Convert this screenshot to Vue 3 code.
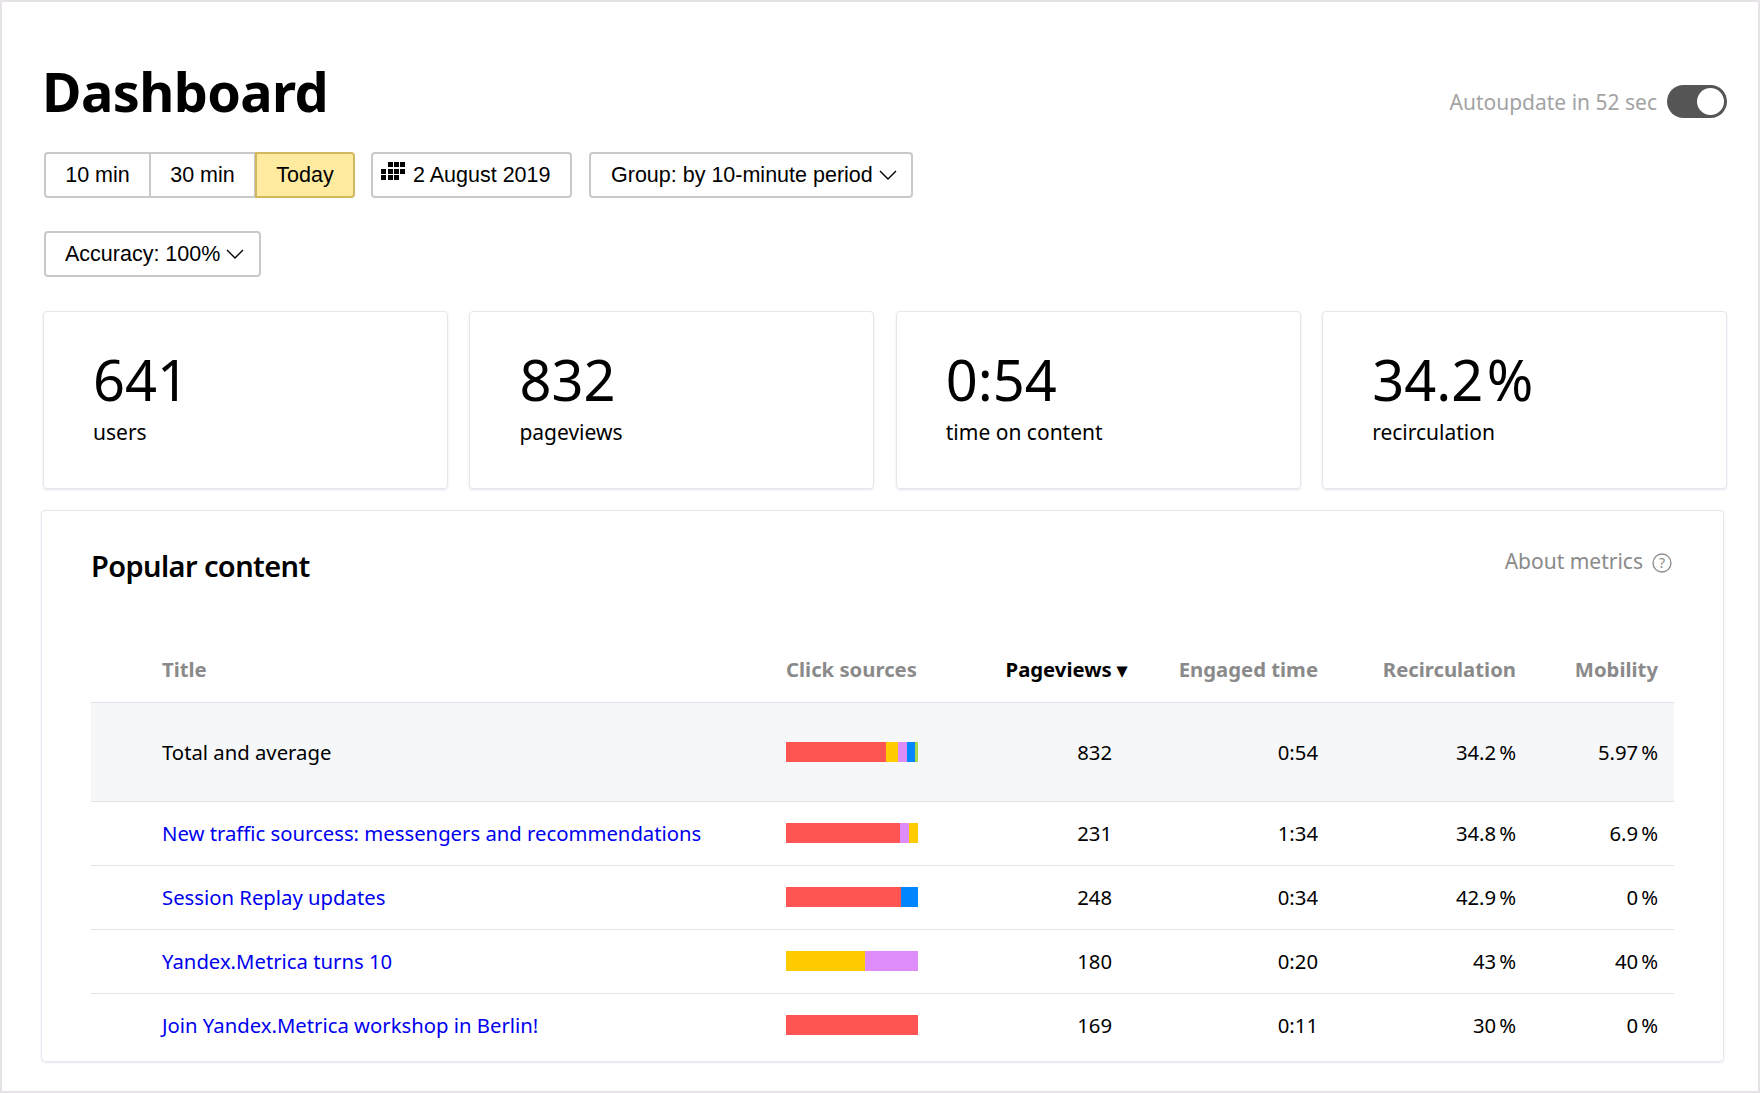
<script setup>
const tabs = [
  { label: '10 min', w: 107 },
  { label: '30 min', w: 105 },
  { label: 'Today', w: 100, active: true },
]
const stats = [
  { value: '641', label: 'users' },
  { value: '832', label: 'pageviews' },
  { value: '0:54', label: 'time on content' },
  { value: '34.2 %', label: 'recirculation' },
]
const R = '#ff5552', Y = '#ffcc00', P = '#de8cfa', B = '#0087ff', G = '#a5d84c'
const rows = [
  { title: 'New traffic sourcess: messengers and recommendations', bar: [[R, 114], [P, 9], [Y, 9]], views: '231', time: '1:34', rec: '34.8', mob: '6.9' },
  { title: 'Session Replay updates', bar: [[R, 115], [B, 17]], views: '248', time: '0:34', rec: '42.9', mob: '0' },
  { title: 'Yandex.Metrica turns 10', bar: [[Y, 79], [P, 53]], views: '180', time: '0:20', rec: '43', mob: '40' },
  { title: 'Join Yandex.Metrica workshop in Berlin!', bar: [[R, 132]], views: '169', time: '0:11', rec: '30', mob: '0' },
]
const totalBar = [[R, 100], [Y, 12], [P, 9], [B, 8], [G, 3]]
</script>

<template>
  <div class="frame">
    <header class="top">
      <h1>Dashboard</h1>
      <div class="auto">
        <span>Autoupdate in 52 sec</span>
        <div class="toggle"><i></i></div>
      </div>
    </header>

    <div class="controls">
      <div class="tabs">
        <div v-for="t in tabs" :key="t.label" class="tab" :class="{ active: t.active }" :style="{ width: t.w + 'px' }">{{ t.label }}</div>
      </div>
      <div class="btn date">
        <svg width="25" height="18" viewBox="0 0 25 18" fill="#000">
          <rect x="7" y="0" width="5" height="5" /><rect x="13" y="0" width="5" height="5" /><rect x="19" y="0" width="5" height="5" />
          <rect x="0" y="7" width="5" height="5" /><rect x="7" y="7" width="5" height="5" /><rect x="13" y="7" width="5" height="5" /><rect x="19" y="7" width="5" height="5" />
          <rect x="0" y="13" width="5" height="5" /><rect x="7" y="13" width="5" height="5" /><rect x="13" y="13" width="5" height="5" />
        </svg>
        <span>2 August 2019</span>
      </div>
      <div class="btn select group">
        <span>Group: by 10-minute period</span>
        <svg class="chev" width="18" height="10" viewBox="0 0 18 10"><path d="M1 1l8 8 8-8" fill="none" stroke="#000" stroke-width="1.4" /></svg>
      </div>
    </div>

    <div class="btn select accuracy">
      <span>Accuracy: 100%</span>
      <svg class="chev" width="18" height="10" viewBox="0 0 18 10"><path d="M1 1l8 8 8-8" fill="none" stroke="#000" stroke-width="1.4" /></svg>
    </div>

    <section class="stats">
      <div v-for="s in stats" :key="s.label" class="card">
        <div class="value">{{ s.value }}</div>
        <div class="label">{{ s.label }}</div>
      </div>
    </section>

    <section class="panel">
      <div class="panel-head">
        <h2>Popular content</h2>
        <div class="about">
          <span>About metrics</span>
          <svg width="20" height="20" viewBox="0 0 20 20">
            <circle cx="10" cy="10" r="9" fill="none" stroke="#8a8a8a" stroke-width="1.3" />
            <text x="10" y="15" text-anchor="middle" font-size="14" font-family="Noto Sans" fill="#8a8a8a">?</text>
          </svg>
        </div>
      </div>

      <div class="table">
        <div class="tr thead">
          <div class="c title">Title</div>
          <div class="c">Click sources</div>
          <div class="c num sorted">Pageviews ▾</div>
          <div class="c num">Engaged time</div>
          <div class="c num">Recirculation</div>
          <div class="c num">Mobility</div>
        </div>
        <div class="tr total">
          <div class="c title">Total and average</div>
          <div class="c"><div class="bar"><i v-for="(b, i) in totalBar" :key="i" :style="{ background: b[0], width: b[1] + 'px' }"></i></div></div>
          <div class="c num views">832</div>
          <div class="c num">0:54</div>
          <div class="c num">34.2<span class="pct">%</span></div>
          <div class="c num">5.97<span class="pct">%</span></div>
        </div>
        <div v-for="r in rows" :key="r.title" class="tr row">
          <div class="c title"><a href="#">{{ r.title }}</a></div>
          <div class="c"><div class="bar"><i v-for="(b, i) in r.bar" :key="i" :style="{ background: b[0], width: b[1] + 'px' }"></i></div></div>
          <div class="c num views">{{ r.views }}</div>
          <div class="c num">{{ r.time }}</div>
          <div class="c num">{{ r.rec }}<span class="pct">%</span></div>
          <div class="c num">{{ r.mob }}<span class="pct">%</span></div>
        </div>
      </div>
    </section>
  </div>
</template>

<style>
html, body { margin: 0; background: #fff; }
</style>

<style scoped>
.frame {
  box-sizing: border-box;
  width: 1760px;
  height: 1093px;
  border: 2px solid #e6e2e8;
  background: #fff;
  padding: 0 0 0 41px;
  font-family: "Noto Sans", sans-serif;
  color: #000;
  overflow: hidden;
}
.top {
  display: flex;
  justify-content: space-between;
  align-items: flex-start;
  height: 150px;
  padding-right: 31px;
}
h1 {
  margin: 54px 0 0 -1px;
  font-size: 54px;
  line-height: 70px;
  font-weight: 700;
  letter-spacing: -.6px;
}
.auto {
  display: flex;
  align-items: center;
  gap: 10px;
  margin-top: 83px;
  font-size: 21px;
  color: #a3a3a3;
}
.toggle {
  width: 60px;
  height: 33px;
  border-radius: 17px;
  background: #555;
  position: relative;
}
.toggle i {
  position: absolute;
  right: 3px;
  top: 3px;
  width: 27px;
  height: 27px;
  border-radius: 50%;
  background: #fff;
}
.controls {
  display: flex;
  align-items: flex-start;
}
.tabs {
  display: flex;
  margin-left: 1px;
  margin-right: 16px;
}
.tab, .btn {
  box-sizing: border-box;
  height: 46px;
  display: flex;
  align-items: center;
  border: 2px solid #c9c9c9;
  background: #fff;
  font-family: "Liberation Sans", sans-serif;
  font-size: 21.5px;
}
.tab {
  justify-content: center;
  border-left-width: 0;
}
.tab:first-child { border-left-width: 2px; border-radius: 4px 0 0 4px; }
.tab:last-child { border-radius: 0 4px 4px 0; }
.tab.active {
  background: #ffeba0;
  border: 2px solid #d1b75f;
  margin-left: -1px;
}
.btn { border-radius: 4px; }
.date {
  width: 201px;
  padding-left: 8px;
  gap: 7px;
  margin-right: 17px;
}
.date svg { margin-top: -9px; }
.select { padding-left: 19px; }
.group { width: 324px; padding-left: 20px; }
.chev { margin-left: 6px; }
.accuracy {
  width: 217px;
  margin: 33px 0 0 1px;
}
.stats {
  display: grid;
  grid-template-columns: repeat(4, 405px);
  column-gap: 21.4px;
  margin-top: 34px;
}
.card {
  box-sizing: border-box;
  height: 178px;
  border: 1px solid #e4e7ee;
  border-radius: 4px;
  box-shadow: 0 1px 2px rgba(200, 205, 220, .5);
  padding: 35px 0 0 49px;
}
.value {
  font-size: 56px;
  line-height: 64px;
  word-spacing: -11px;
}
.label {
  font-size: 21px;
  line-height: 28px;
  margin-top: 7px;
}
.panel {
  box-sizing: border-box;
  width: 1683px;
  height: 552px;
  margin: 21px 0 0 -2px;
  border: 1px solid #e4e7ee;
  border-radius: 4px;
  box-shadow: 0 1px 2px rgba(200, 205, 220, .4);
  padding: 0 49px 0 49px;
}
.panel-head {
  display: flex;
  justify-content: space-between;
  align-items: flex-start;
  height: 137px;
}
h2 {
  margin: 35px 0 0;
  font-size: 29px;
  line-height: 40px;
  font-weight: 600;
  letter-spacing: -.6px;
}
.about {
  display: flex;
  align-items: center;
  gap: 9px;
  margin-top: 36px;
  font-size: 21px;
  line-height: 28px;
  color: #8a8a8a;
}
.about svg { margin-top: 4px; margin-right: 2px; }
.tr {
  display: grid;
  grid-template-columns: 695px 164px 177px 191px 198px 142px 16px;
  align-items: center;
  font-size: 20.3px;
}
.title { padding-left: 71px; }
.num { text-align: right; }
.views { padding-right: 15px; }
.thead {
  height: 55px;
  align-items: start;
  padding-top: 8px;
  box-sizing: border-box;
  font-weight: 700;
  color: #8a8a8a;
  border-bottom: 1px solid #dde2ea;
  line-height: 27px;
}
.sorted { color: #000; }
.total {
  height: 99px;
  padding-bottom: 1px;
  background: #f6f7f9;
  border-bottom: 1px solid #e3e3e3;
  box-sizing: border-box;
}
.total .bar { margin-top: 1px; }
.row {
  height: 64px;
  padding-bottom: 1px;
  box-sizing: border-box;
  border-bottom: 1px solid #e3e3e3;
}
.row:last-child { border-bottom-color: transparent; }
.row a { color: #0000ee; text-decoration: none; }
.bar { display: flex; height: 20px; width: 132px; }
.bar i { display: block; height: 100%; }
.pct { margin-left: 3px; }
</style>
